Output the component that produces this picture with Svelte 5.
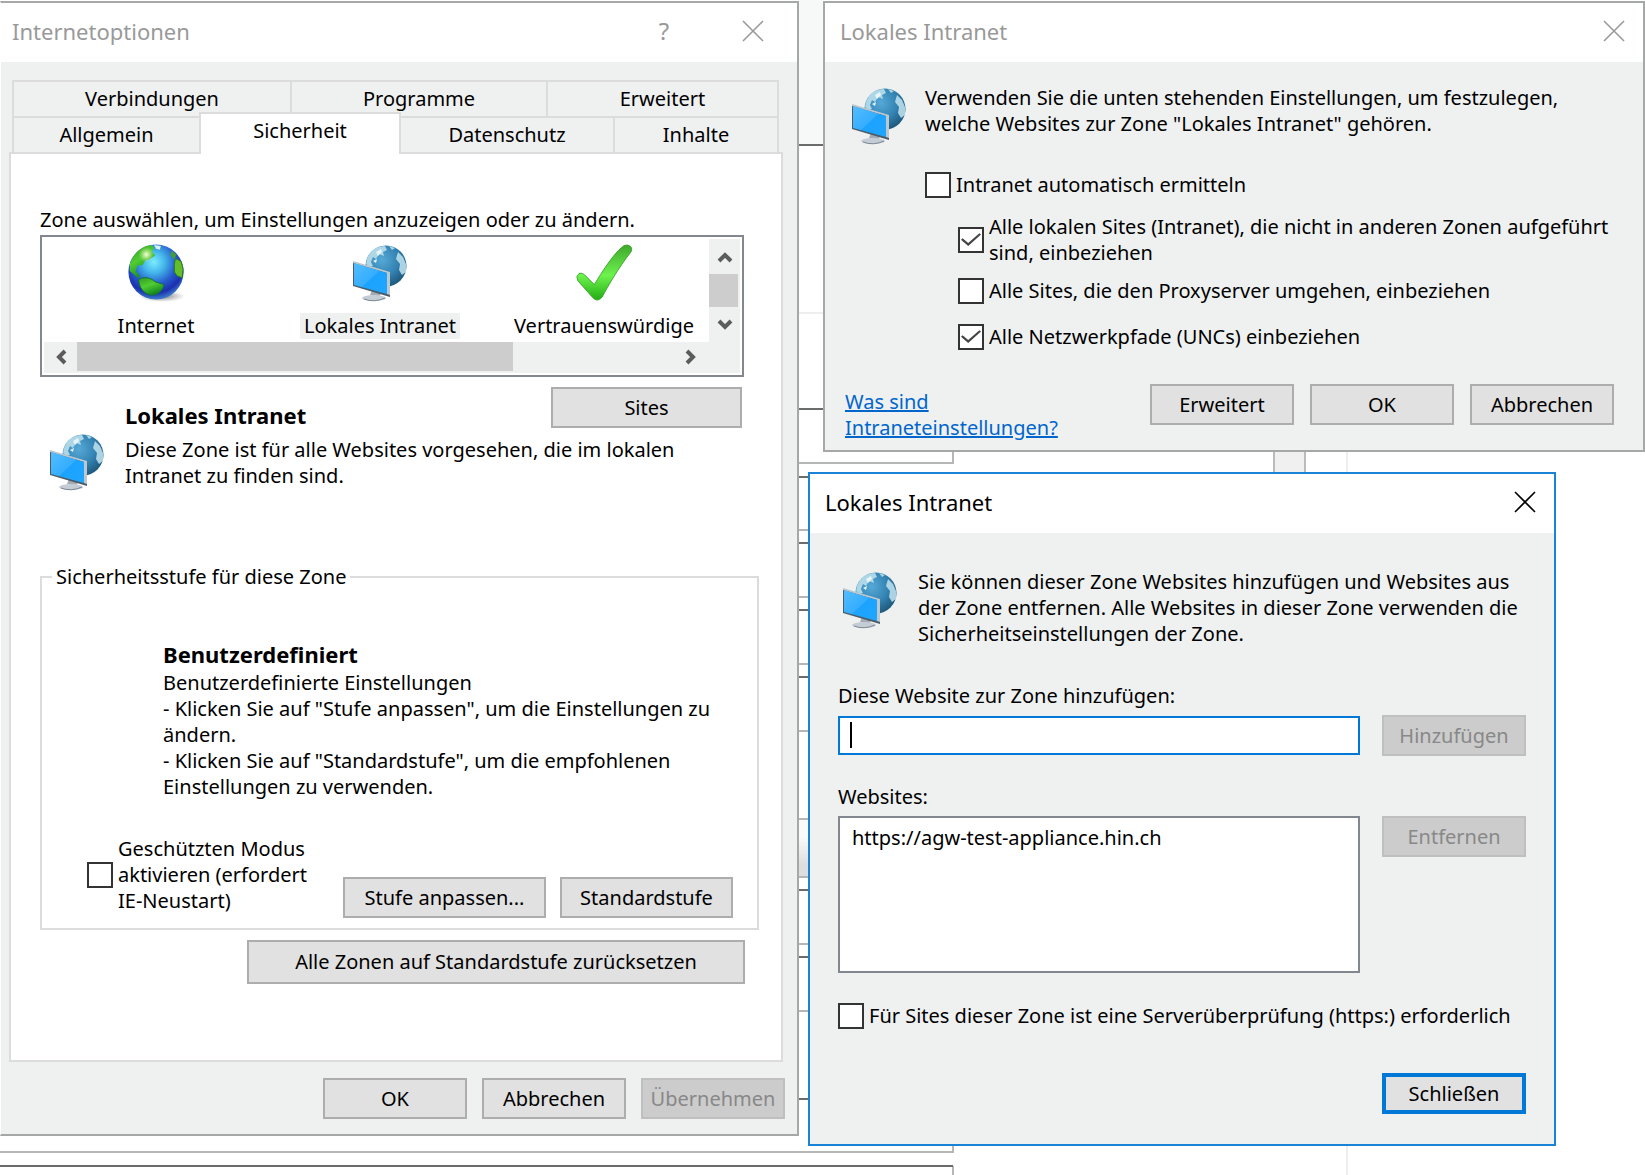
<script lang="ts">
  const upperTabs = ["Verbindungen", "Programme", "Erweitert"];
  const lowerTabs = ["Allgemein", "Sicherheit", "Datenschutz", "Inhalte"];
  const zones = ["Internet", "Lokales Intranet", "Vertrauenswürdige"];
  const sites = ["https://agw-test-appliance.hin.ch"];

  let activeTab = $state("Sicherheit");
  let activeZone = $state("Lokales Intranet");
  let protectedMode = $state(false);
  let autoDetect = $state(false);
  let includeLocal = $state(true);
  let includeProxy = $state(false);
  let includeUnc = $state(true);
  let requireHttps = $state(false);
  let newSite = $state("");
</script>

{#snippet closeIcon()}
  <svg width="22" height="22" viewBox="0 0 22 22" aria-hidden="true">
    <path d="M1 1L21 21M21 1L1 21" stroke="currentColor" stroke-width="1.6" fill="none" />
  </svg>
{/snippet}

{#snippet arrow(d: string)}
  <svg width="16" height="16" viewBox="0 0 16 16" aria-hidden="true">
    <path {d} stroke="#5c5c5c" stroke-width="4" fill="none" />
  </svg>
{/snippet}

{#snippet intranetIcon()}
  <svg class="icon" width="56" height="58" viewBox="0 0 56 58" aria-hidden="true">
    <defs>
      <radialGradient id="globe" cx="0.4" cy="0.35" r="0.7">
        <stop offset="0" stop-color="#56a9d6" />
        <stop offset="0.55" stop-color="#3484b4" />
        <stop offset="1" stop-color="#1d5578" />
      </radialGradient>
      <linearGradient id="screen" x1="0" y1="0" x2="1" y2="1">
        <stop offset="0" stop-color="#53bdff" />
        <stop offset="0.5" stop-color="#35adff" />
        <stop offset="0.52" stop-color="#1ba3ff" />
        <stop offset="1" stop-color="#1ea6ff" />
      </linearGradient>
    </defs>
    <circle cx="34" cy="22" r="20.5" fill="url(#globe)" />
    <path
      d="M15 15C18 7 24 2 33 2L35 6L31 8L32 12L27 10L24 15L21 13L19 18L21 22L17 23L14 20ZM37 2L43 4L40 6ZM46 8L51 13L54 20L54 28L50 31L47 26L48 20L44 15Z"
      fill="#b9deeb"
      opacity="0.9"
    />
    <path d="M24 8L29 5L30 8L26 12ZM21 17L25 15L24 19Z" fill="#e6f5f8" />
    <path d="M20 46L29 48L28 52L18 51Z" fill="#a4abb4" />
    <ellipse cx="22" cy="54" rx="12" ry="3" fill="#c4ccd6" />
    <path d="M12 55Q22 59 33 54" stroke="#7c8794" stroke-width="1" fill="none" />
    <path d="M1 18L38 29L38 53L1 42Z" fill="#4b5c68" />
    <path d="M1 17L38 28L38 51L35 50L35 29L1 19Z" fill="#bdc7ce" />
    <path d="M2 19L35 29L35 50L2 41Z" fill="url(#screen)" />
  </svg>
{/snippet}

{#snippet earthIcon()}
  <svg width="60" height="62" viewBox="0 0 60 62" aria-hidden="true">
    <defs>
      <radialGradient id="ocean" cx="0.46" cy="0.32" r="0.66">
        <stop offset="0" stop-color="#7cecff" />
        <stop offset="0.3" stop-color="#43b5ea" />
        <stop offset="0.62" stop-color="#2659cb" />
        <stop offset="0.85" stop-color="#1c2fae" />
        <stop offset="1" stop-color="#3974c8" />
      </radialGradient>
      <radialGradient id="shade">
        <stop offset="0" stop-color="#555" stop-opacity="0.8" />
        <stop offset="1" stop-color="#777" stop-opacity="0" />
      </radialGradient>
      <radialGradient id="glow">
        <stop offset="0" stop-color="#f6ffd8" />
        <stop offset="1" stop-color="#d4f19c" stop-opacity="0" />
      </radialGradient>
      <linearGradient id="land" x1="0" y1="0" x2="0.5" y2="1">
        <stop offset="0" stop-color="#2f9b22" />
        <stop offset="0.5" stop-color="#51cc31" />
        <stop offset="1" stop-color="#118420" />
      </linearGradient>
    </defs>
    <ellipse cx="36" cy="55" rx="24" ry="6" fill="url(#shade)" />
    <circle cx="30" cy="30" r="28.5" fill="url(#ocean)" />
    <path d="M3 22C7 9 16 3 25 2L28 5L26 9L29 13L23 17L19 18L16 23L11 23L9 29L14 35L11 36L3 29Z" fill="url(#land)" />
    <circle cx="20" cy="12" r="8" fill="url(#glow)" />
    <path d="M28 2L35 3L34 7L30 6Z" fill="#d9eef2" />
    <path d="M12 38C17 34 25 36 29 40L38 43C38 48 33 53 27 54C21 54 13 50 12 38Z" fill="url(#land)" stroke="#136e3b" stroke-width="1" />
    <path d="M50 16L56 19L58 27L57 36L52 34L49 30L49 22Z" fill="#65bd28" stroke="#257b25" stroke-width="1" />
    <path d="M46 8L51 12L49 17L45 13Z" fill="#469d38" />
  </svg>
{/snippet}

{#snippet checkIcon()}
  <svg width="60" height="62" viewBox="0 0 60 62" aria-hidden="true">
    <defs>
      <linearGradient id="tick" x1="0" y1="0" x2="0" y2="1">
        <stop offset="0" stop-color="#3fa82d" />
        <stop offset="0.55" stop-color="#6df34d" />
        <stop offset="1" stop-color="#22ad13" />
      </linearGradient>
    </defs>
    <path
      d="M2 35C3 31 7 30 10 33L20 43C28 30 39 12 49 4C53 0 61 3 58 9C44 27 35 43 28 56Q23 62 18 56L3 39Z"
      fill="url(#tick)"
      stroke="#3fa52e"
      stroke-width="1"
    />
  </svg>
{/snippet}

<main class="desktop">
  <!-- edges of the page that lies under the dialogs -->
  <svg class="backdrop" aria-hidden="true">
    <rect x="799" width="24" height="145" fill="#f7f9f8" />
    <path d="M799 313H823M1347 451V473M1347 1144V1175" stroke="#eeeeee" stroke-width="2" />
    <path
      d="M799 463H953V451M799 530H808M799 597H808M799 664H808M799 731H808M799 819H808M799 877H808M799 944H808M799 1011H808M0 1152H953V1144M953 1166V1175"
      stroke="#b5b7b6"
      stroke-width="2"
      fill="none"
    />
    <path
      d="M799 145H823M799 409H823M799 477H808M799 543H808M799 610H808M799 677H808M799 890H808M799 957H808M799 1099H808M0 1166H953"
      stroke="#6a6c6b"
      stroke-width="2"
    />
    <linearGradient id="fade" x1="0" y1="0" x2="0" y2="1">
      <stop offset="0.3" stop-color="#fafafa" />
      <stop offset="0.8" stop-color="#dedede" />
    </linearGradient>
    <rect x="799" y="820" width="9" height="56" fill="url(#fade)" />
    <rect x="1274" y="440" width="31" height="40" fill="#f0f0f0" stroke="#bbbbbb" stroke-width="2" />
  </svg>

  <section class="window options" aria-label="Internetoptionen">
    <header class="titlebar">
      <h1>Internetoptionen</h1>
      <button class="caption help" aria-label="Hilfe">?</button>
      <button class="caption" aria-label="Schließen">{@render closeIcon()}</button>
    </header>

    <div class="options-body">
      <div class="tabs" role="tablist">
        <div class="tab-row upper">
          {#each upperTabs as tab}
            <button class="tab" role="tab" aria-selected={tab === activeTab} onclick={() => (activeTab = tab)}>{tab}</button>
          {/each}
        </div>
        <div class="tab-row lower">
          {#each lowerTabs as tab}
            <button
              class="tab"
              class:active={tab === activeTab}
              role="tab"
              aria-selected={tab === activeTab}
              onclick={() => (activeTab = tab)}>{tab}</button
            >
          {/each}
        </div>
      </div>

      <div class="page">
        <p>Zone auswählen, um Einstellungen anzuzeigen oder zu ändern.</p>
        <div class="zone-box">
          <div class="zones">
            {#each zones as zone, i}
              <button class="zone" onclick={() => (activeZone = zone)}>
                {#if i === 0}
                  {@render earthIcon()}
                {:else if i === 1}
                  {@render intranetIcon()}
                {:else}
                  {@render checkIcon()}
                {/if}
                <span class="zone-name" class:selected={zone === activeZone}>{zone}</span>
              </button>
            {/each}
          </div>
          <div class="vscroll">
            <button aria-label="Nach oben">{@render arrow("M2 12L8 6L14 12")}</button>
            <div class="vthumb"></div>
            <button aria-label="Nach unten">{@render arrow("M2 4L8 10L14 4")}</button>
          </div>
          <div class="hscroll">
            <button aria-label="Nach links">{@render arrow("M12 2L6 8L12 14")}</button>
            <div class="track"><div class="hthumb"></div></div>
            <button aria-label="Nach rechts">{@render arrow("M4 2L10 8L4 14")}</button>
          </div>
        </div>

        <div class="zone-info">
          {@render intranetIcon()}
          <div class="zone-text">
            <div class="zone-head">
              <h2>Lokales Intranet</h2>
              <button class="btn sites">Sites</button>
            </div>
            <p>Diese Zone ist für alle Websites vorgesehen, die im lokalen<br />Intranet zu finden sind.</p>
          </div>
        </div>

        <fieldset>
          <legend>Sicherheitsstufe für diese Zone</legend>
          <div class="level">
            <h2>Benutzerdefiniert</h2>
            <p>
              Benutzerdefinierte Einstellungen<br />
              - Klicken Sie auf "Stufe anpassen", um die Einstellungen zu<br />ändern.<br />
              - Klicken Sie auf "Standardstufe", um die empfohlenen<br />Einstellungen zu verwenden.
            </p>
          </div>
          <div class="level-actions">
            <label class="check">
              <input type="checkbox" bind:checked={protectedMode} />
              <span>Geschützten Modus<br />aktivieren (erfordert<br />IE-Neustart)</span>
            </label>
            <button class="btn custom">Stufe anpassen...</button>
            <button class="btn default-level">Standardstufe</button>
          </div>
        </fieldset>

        <button class="btn reset">Alle Zonen auf Standardstufe zurücksetzen</button>
      </div>

      <footer class="buttons">
        <button class="btn">OK</button>
        <button class="btn">Abbrechen</button>
        <button class="btn" disabled>Übernehmen</button>
      </footer>
    </div>
  </section>

  <section class="window intranet" aria-label="Lokales Intranet">
    <header class="titlebar">
      <h1>Lokales Intranet</h1>
      <button class="caption" aria-label="Schließen">{@render closeIcon()}</button>
    </header>
    <div class="intranet-body">
      <div class="intro">
        {@render intranetIcon()}
        <p>Verwenden Sie die unten stehenden Einstellungen, um festzulegen,<br />welche Websites zur Zone "Lokales Intranet" gehören.</p>
      </div>
      <div class="choices">
        <label class="check">
          <input type="checkbox" bind:checked={autoDetect} />
          <span>Intranet automatisch ermitteln</span>
        </label>
        <label class="check nested">
          <input type="checkbox" bind:checked={includeLocal} />
          <span>Alle lokalen Sites (Intranet), die nicht in anderen Zonen aufgeführt<br />sind, einbeziehen</span>
        </label>
        <label class="check nested">
          <input type="checkbox" bind:checked={includeProxy} />
          <span>Alle Sites, die den Proxyserver umgehen, einbeziehen</span>
        </label>
        <label class="check nested last">
          <input type="checkbox" bind:checked={includeUnc} />
          <span>Alle Netzwerkpfade (UNCs) einbeziehen</span>
        </label>
      </div>
      <footer class="intranet-footer">
        <a href="#hilfe">Was sind<br />Intraneteinstellungen?</a>
        <div class="buttons">
          <button class="btn">Erweitert</button>
          <button class="btn">OK</button>
          <button class="btn">Abbrechen</button>
        </div>
      </footer>
    </div>
  </section>

  <section class="window site-dialog" aria-label="Websites">
    <header class="titlebar">
      <h1>Lokales Intranet</h1>
      <button class="caption" aria-label="Schließen">{@render closeIcon()}</button>
    </header>
    <div class="site-body">
      <div class="intro">
        {@render intranetIcon()}
        <p>
          Sie können dieser Zone Websites hinzufügen und Websites aus<br />der Zone entfernen. Alle Websites in dieser Zone verwenden die<br
          />Sicherheitseinstellungen der Zone.
        </p>
      </div>
      <label for="new-site">Diese Website zur Zone hinzufügen:</label>
      <div class="row">
        <input id="new-site" class="text" class:empty={newSite === ""} type="text" bind:value={newSite} />
        <button class="btn" disabled>Hinzufügen</button>
      </div>
      <label class="list-label" for="site-list">Websites:</label>
      <div class="row">
        <select id="site-list" size="5">
          {#each sites as site}
            <option>{site}</option>
          {/each}
        </select>
        <button class="btn" disabled>Entfernen</button>
      </div>
      <label class="check https">
        <input type="checkbox" bind:checked={requireHttps} />
        <span>Für Sites dieser Zone ist eine Serverüberprüfung (https:) erforderlich</span>
      </label>
      <footer class="buttons">
        <button class="btn primary">Schließen</button>
      </footer>
    </div>
  </section>
</main>

<style>
  :global(body) {
    background: #fff;
  }
  .desktop {
    position: relative;
    display: grid;
    grid-template-columns: 799fr 9fr 15fr 733fr 89fr;
    grid-template-rows: auto 1fr;
    row-gap: 20px;
    align-items: start;
    min-height: 100vh;
    padding-top: 1px;
    box-sizing: border-box;
    overflow: hidden;
    font-family: "Noto Sans", "Open Sans", sans-serif;
    font-size: 20px;
    line-height: 26px;
    color: #000;
  }
  .backdrop {
    position: absolute;
    inset: 0;
    width: 100%;
    height: 100%;
  }
  button,
  input,
  select {
    font: inherit;
    color: inherit;
    border-radius: 0;
    margin: 0;
    box-sizing: border-box;
  }
  h1,
  h2,
  p {
    margin: 0;
    font-size: 22px;
  }
  p {
    font-size: inherit;
  }
  p,
  label,
  .btn,
  .zone-name {
    white-space: nowrap;
  }
  svg {
    display: block;
    flex-shrink: 0;
  }

  .window {
    position: relative;
    box-sizing: border-box;
    border: 2px solid #a6a8a8;
    background: #eff1f1;
  }
  .options {
    grid-column: 1;
    grid-row: 1 / 3;
    border-left: 1px solid #fff;
  }
  .intranet {
    grid-column: 4 / 6;
    grid-row: 1;
  }
  .site-dialog {
    grid-column: 3 / 5;
    grid-row: 2;
    border-color: #1883d7;
  }
  .titlebar {
    display: flex;
    align-items: center;
    box-sizing: border-box;
    height: 59px;
    padding: 0 18px 3px 15px;
    background: #fff;
    color: #999;
  }
  .options .titlebar {
    padding-left: 11px;
    padding-right: 33px;
  }
  .site-dialog .titlebar {
    color: #000;
  }
  .titlebar h1 {
    flex: 1;
    font-weight: 400;
  }
  .caption {
    display: flex;
    justify-content: center;
    padding: 0;
    border: 0;
    background: none;
  }
  .help {
    width: 24px;
    margin-right: 66px;
    font-size: 24px;
  }

  .options-body {
    padding: 18px 12px 15px 8px;
  }
  .tabs {
    padding: 0 6px 0 3px;
  }
  .tab-row {
    display: grid;
    border-left: 2px solid #dcdcdc;
  }
  .upper {
    grid-template-columns: 278fr 256fr 231fr;
  }
  .lower {
    grid-template-columns: 187fr 200fr 214fr 164fr;
  }
  .tab {
    height: 36px;
    padding: 0;
    border: 0;
    border-top: 2px solid #dcdcdc;
    border-right: 2px solid #dcdcdc;
    background: none;
  }
  .tab.active {
    position: relative;
    height: 42px;
    margin: -4px 0 -2px -2px;
    padding-bottom: 6px;
    border-left: 2px solid #dcdcdc;
    background: #fff;
  }
  .page {
    display: flex;
    flex-direction: column;
    margin-right: 2px;
    padding: 53px 22px 76px 29px;
    border: 2px solid #dcdcdc;
    background: #fff;
  }

  .zone-box {
    display: grid;
    grid-template-columns: 1fr 31px;
    margin: 2px 15px 0 0;
    padding: 2px;
    border: 2px solid #828790;
  }
  .zones {
    display: grid;
    grid-template-columns: repeat(3, 224px);
    justify-content: start;
    height: 102px;
    overflow: hidden;
  }
  .zone {
    display: flex;
    flex-direction: column;
    align-items: center;
    gap: 10px;
    padding: 4px 0 0;
    border: 0;
    background: none;
  }
  .zone svg {
    height: 60px;
  }
  .zone-name {
    padding: 0 4px;
  }
  .zone-name.selected {
    background: #eff1f1;
  }
  .vscroll,
  .hscroll {
    display: flex;
    background: #eff1f1;
  }
  .vscroll {
    flex-direction: column;
  }
  .hscroll {
    grid-column: 1 / 3;
    height: 31px;
    padding-right: 33px;
  }
  .vscroll button,
  .hscroll button {
    display: flex;
    align-items: center;
    justify-content: center;
    width: 33px;
    height: 30px;
    padding: 0;
    border: 0;
    background: none;
  }
  .vscroll button {
    width: 31px;
    height: 35px;
  }
  .vthumb {
    height: 33px;
    margin-right: 2px;
    background: #cdcdcd;
  }
  .track {
    flex: 1;
  }
  .hthumb {
    width: 73%;
    height: 29px;
    background: #cdcdcd;
  }

  .zone-info {
    display: flex;
    gap: 20px;
    margin-top: 10px;
    padding: 0 17px 0 9px;
  }
  .zone-info > svg,
  .zone-info > :global(svg) {
    margin-top: 46px;
  }
  .zone-text {
    flex: 1;
  }
  .zone-head {
    display: flex;
    align-items: center;
    justify-content: space-between;
    height: 50px;
  }
  .zone-head h2 {
    padding-top: 6px;
  }
  .sites {
    align-self: flex-start;
    width: 191px;
  }
  fieldset {
    min-width: 0;
    margin: 73px 0 0;
    padding: 48px 24px 10px 45px;
    border: 2px solid #dcdcdc;
  }
  legend {
    margin-left: -35px;
    padding: 0 4px;
  }
  .level {
    padding-left: 76px;
  }
  .level h2 {
    line-height: 32px;
  }
  .level-actions {
    display: flex;
    align-items: flex-end;
    margin-top: 36px;
  }
  .level-actions .check {
    flex: 1;
    padding-bottom: 4px;
  }
  .custom {
    width: 203px;
    margin-right: 14px;
  }
  .default-level {
    width: 173px;
  }

  .btn {
    height: 41px;
    min-width: 144px;
    padding: 0;
    border: 2px solid #adadad;
    background: #e1e1e1;
  }
  .btn:disabled {
    border-color: #bfbfbf;
    background: #ccc;
    color: #888;
  }
  .primary {
    border: 4px solid #0078d7;
  }
  .reset {
    align-self: flex-end;
    width: 498px;
    height: 44px;
    margin: 10px 14px 0 0;
  }
  .buttons {
    display: flex;
    justify-content: flex-end;
    gap: 16px;
  }
  .options .buttons {
    gap: 15px;
    margin-top: 16px;
  }

  .check {
    display: flex;
    align-items: center;
    gap: 5px;
  }
  .check input {
    appearance: none;
    position: relative;
    flex-shrink: 0;
    width: 26px;
    height: 26px;
    border: 2px solid #333;
    background: #fff;
  }
  .check input:checked::before {
    content: "";
    position: absolute;
    inset: 2px 1px;
    background: #444;
    clip-path: polygon(0 48%, 8% 40%, 36% 66%, 92% 12%, 100% 20%, 36% 84%);
  }

  .intro {
    display: flex;
    gap: 18px;
  }
  .intranet-body {
    padding: 23px 29px 9px 20px;
  }
  .intranet .intro {
    padding-left: 6px;
  }
  .intro svg,
  .intro :global(svg) {
    margin-top: 2px;
  }
  .choices {
    display: flex;
    flex-direction: column;
    padding-left: 80px;
    margin-top: 27px;
  }
  .nested {
    padding-left: 33px;
    margin-top: 16px;
  }
  .nested + .nested {
    margin-top: 12px;
  }
  .nested + .last {
    margin-top: 20px;
  }
  .intranet-footer {
    display: flex;
    justify-content: space-between;
    align-items: flex-start;
    margin-top: 34px;
  }
  .intranet-footer a {
    color: #0066cc;
    margin-top: 5px;
  }

  .site-body {
    padding: 36px 28px 30px 28px;
  }
  .site-dialog .intro {
    gap: 20px;
    padding-left: 4px;
    margin-bottom: 36px;
  }
  .site-body label {
    display: block;
  }
  .site-body .list-label {
    margin-top: 28px;
  }
  .site-body .https {
    display: flex;
    margin-top: 30px;
  }
  .site-dialog .buttons {
    margin-top: 44px;
  }
  .row {
    display: flex;
    gap: 22px;
    align-items: flex-start;
    margin-top: 6px;
  }
  .text {
    flex: 1;
    min-width: 0;
    height: 39px;
    margin-top: 1px;
    padding: 0 10px;
    border: 2px solid #0078d7;
    outline: none;
    background: #fff;
  }
  /* insertion mark of the empty field */
  .text.empty {
    background: linear-gradient(#000, #000) 10px 4px / 2px 26px no-repeat #fff;
  }
  select {
    appearance: none;
    flex: 1;
    min-width: 0;
    height: 157px;
    padding: 6px 10px;
    border: 2px solid #828790;
    background: #fff;
    outline: none;
    overflow: hidden;
  }
  option {
    padding: 0 2px;
    min-height: 26px;
  }
</style>
